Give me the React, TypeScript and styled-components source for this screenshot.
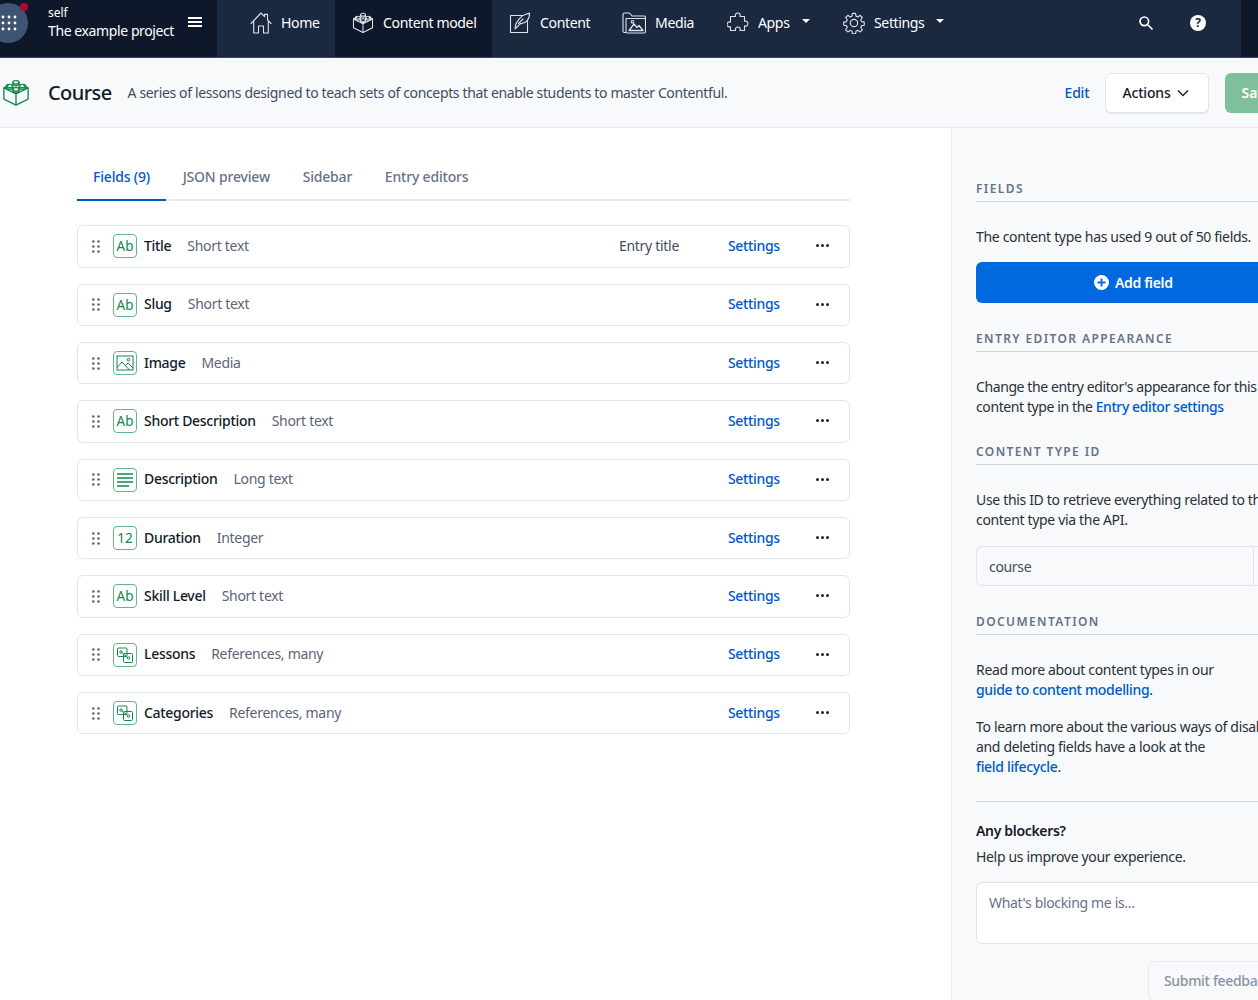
import React from "react";
import styled, { createGlobalStyle } from "styled-components";

const Global = createGlobalStyle`
  html, body { margin: 0; padding: 0; background: #fff; overflow: hidden; }
  body { font-family: "Noto Sans", "Open Sans", sans-serif; color: #2a3039; }
  * { box-sizing: border-box; }
`;

const Page = styled.div`
  width: 1258px;
  height: 1000px;
  overflow: hidden;
  display: flex;
  flex-direction: column;
`;

const TopBar = styled.nav`
  height: 58px;
  flex: none;
  display: flex;
  background: #1a2840;
  color: #fff;
  border-bottom: 1px solid #3d4757;
`;

const Brand = styled.div`
  width: 217px;
  flex: none;
  background: #0f182b;
  display: flex;
  align-items: center;
  position: relative;
`;

const Launcher = styled.div`
  position: relative;
  width: 40px;
  height: 40px;
  margin: -11px 0 0 -12px;
  border-radius: 50%;
  background: #3f5470;
  flex: none;
  display: flex;
  align-items: center;
  justify-content: center;
  padding-left: 2px;
`;

const Dot = styled.span`
  position: absolute;
  top: 0;
  right: 0;
  width: 8px;
  height: 8px;
  border-radius: 50%;
  background: #b3052f;
`;

const Project = styled.div`
  margin: -11px 0 0 20px;
  width: 140px;
  flex: none;
`;

const Org = styled.div`
  font-size: 12px;
  line-height: 16px;
`;

const ProjectName = styled.div`
  font-size: 14px;
  line-height: 20px;
  letter-spacing: -0.4px;
  white-space: nowrap;
`;

const Burger = styled.div`
  width: 14px;
  margin-top: -13px;
  display: flex;
  flex-direction: column;
  gap: 2px;
  span { display: block; height: 2px; background: #fff; }
`;

const NavItem = styled.div<{ $w: number; $bg?: string; $lift?: number }>`
  width: ${(p) => p.$w}px;
  flex: none;
  display: flex;
  align-items: center;
  padding-left: ${(p) => p.$lift ?? 33}px;
  gap: 9px;
  background: ${(p) => p.$bg ?? "transparent"};
  font-size: 14.1px;
  letter-spacing: -0.4px;
  white-space: nowrap;
  padding-bottom: 12px;
  svg { flex: none; }
`;

const Caret = styled.span`
  width: 0;
  height: 0;
  margin: -4px 0 0 3px;
  border-left: 4.5px solid transparent;
  border-right: 4.5px solid transparent;
  border-top: 4.5px solid #fff;
`;

const Tools = styled.div`
  flex: 1;
  display: flex;
  align-items: center;
  padding-bottom: 12px;
  justify-content: flex-end;
  gap: 36px;
`;

const EdgeBlock = styled.div`
  width: 17px;
  flex: none;
  background: #0f182b;
  margin-left: -1px;
  align-self: stretch;
  margin-bottom: -12px;
`;

const Help = styled.span`
  width: 16px;
  height: 16px;
  border-radius: 50%;
  background: #fff;
  color: #1a2840;
  font-size: 12px;
  font-weight: 700;
  line-height: 16px;
  text-align: center;
`;

const Header = styled.header`
  height: 70px;
  flex: none;
  display: flex;
  align-items: center;
  background: #f7f9fa;
  border-bottom: 1px solid #e5e8ec;
  padding-left: 2px;
  white-space: nowrap;
  svg { flex: none; }
`;

const Title = styled.h1`
  margin: 0 0 0 18px;
  font-size: 20px;
  font-weight: 500;
  color: #111b2b;
  letter-spacing: -0.6px;
`;

const Description = styled.p`
  margin: 0 0 0 16px;
  font-size: 14px;
  letter-spacing: -0.36px;
  color: #414d63;
  width: 937px;
  flex: none;
`;

const EditLink = styled.a`
  color: #0059c8;
  font-size: 14px;
  font-weight: 500;
  letter-spacing: -0.2px;
  width: 40px;
  flex: none;
`;

const ActionsButton = styled.div`
  width: 104px;
  height: 40px;
  flex: none;
  border: 1px solid #e0e5ea;
  border-radius: 6px;
  background: #fff;
  display: flex;
  align-items: center;
  justify-content: center;
  gap: 6px;
  font-size: 14px;
  font-weight: 500;
  letter-spacing: -0.2px;
  color: #111b2b;
  box-shadow: 0 1px 0 rgba(25, 37, 50, 0.08);
`;

const SaveButton = styled.div`
  width: 80px;
  height: 40px;
  flex: none;
  margin-left: 16px;
  border-radius: 6px;
  background: #7fbf9b;
  color: #fff;
  font-size: 14px;
  font-weight: 600;
  line-height: 40px;
  padding-left: 17px;
`;

const Body = styled.div`
  flex: 1;
  display: flex;
  min-height: 0;
`;

const Main = styled.main`
  width: 951px;
  flex: none;
  background: #fff;
  padding: 32px 0 0 77px;
`;

const Tabs = styled.div`
  width: 773px;
  height: 41px;
  display: flex;
  gap: 0.6px;
  border-bottom: 2px solid #e7ebee;
`;

const Tab = styled.div<{ $active?: boolean }>`
  height: 41px;
  padding: 7px 16px 0;
  font-size: 14px;
  font-weight: 500;
  letter-spacing: -0.18px;
  line-height: 20px;
  color: ${(p) => (p.$active ? "#0059c8" : "#67728a")};
  border-bottom: 2px solid ${(p) => (p.$active ? "#0059c8" : "transparent")};
`;

const Rows = styled.div`
  margin-top: 24.34px;
  width: 773px;
  display: flex;
  flex-direction: column;
  gap: 16px;
`;

const Row = styled.div`
  height: 42.33px;
  border: 1px solid #e0e5ea;
  border-radius: 6px;
  display: flex;
  align-items: center;
  padding-left: 14px;
  font-size: 14px;
`;

const Handle = styled.svg`
  flex: none;
`;

const FieldBadge = styled.span`
  width: 24px;
  height: 24px;
  flex: none;
  margin-left: 13px;
  border: 1px solid #64b58a;
  border-radius: 4px;
  color: #14884a;
  font-size: 13.5px;
  line-height: 22px;
  text-align: center;
  display: flex;
  align-items: center;
  justify-content: center;
`;

const FieldName = styled.span`
  margin: -2px 0 0 7px;
  font-weight: 500;
  letter-spacing: -0.3px;
  color: #111b2b;
`;

const FieldType = styled.span`
  margin: -2px 0 0 16px;
  color: #5a6479;
  letter-spacing: -0.3px;
  flex: 1;
`;

const EntryTitle = styled.span`
  width: 109px;
  flex: none;
  margin-top: -2px;
  color: #414d63;
  letter-spacing: -0.3px;
`;

const SettingsLink = styled.a`
  width: 88px;
  flex: none;
  margin-top: -2px;
  color: #0059c8;
  font-weight: 500;
  letter-spacing: -0.35px;
`;

const More = styled.span`
  width: 13px;
  flex: none;
  margin-right: 20px;
  display: flex;
  gap: 2px;
  margin-top: -1px;
  i { width: 3px; height: 3px; border-radius: 50%; background: #192532; }
`;

const Aside = styled.aside`
  flex: 1;
  background: #f7f9fa;
  border-left: 1px solid #eceff1;
  padding: 54px 0 0 24px;
  font-size: 14px;
  line-height: 20px;
  letter-spacing: -0.33px;
  color: #2a3039;
  white-space: nowrap;
  overflow: hidden;
`;

const SectionHead = styled.h2<{ $top?: number }>`
  margin: ${(p) => p.$top ?? 0}px 0 0;
  width: 320px;
  height: 14px;
  padding-bottom: 5px;
  border-bottom: 1px solid #cfd9e0;
  box-sizing: content-box;
  font-size: 12px;
  line-height: 14px;
  font-weight: 600;
  letter-spacing: 1.39px;
  color: #67728a;
`;

const Para = styled.p<{ $top?: number; $tight?: boolean }>`
  margin: ${(p) => p.$top ?? 25}px 0 0;
  letter-spacing: ${(p) => (p.$tight ? "-0.4px" : "inherit")};
`;

const Link = styled.a`
  color: #0059c8;
  font-weight: 500;
`;

const PrimaryButton = styled.div`
  margin-top: 15px;
  width: 312px;
  height: 41px;
  border-radius: 6px;
  background: #0069e0;
  color: #fff;
  display: flex;
  align-items: center;
  gap: 6px;
  padding-left: 118px;
  font-weight: 600;
  font-size: 14px;
`;

const IdInput = styled.div`
  margin-top: 16px;
  width: 320px;
  height: 40px;
  border: 1px solid #e0e5ea;
  border-radius: 6px 0 0 6px;
  display: flex;
  align-items: center;
  padding: 1px 0 0 12px;
  color: #414d63;
  position: relative;
  &::after {
    content: "";
    position: absolute;
    left: 276px;
    top: 0;
    bottom: 0;
    width: 1px;
    background: #e0e5ea;
  }
`;

const Rule = styled.hr`
  margin: 24px 0 0;
  width: 320px;
  border: 0;
  border-top: 1px solid #cfd9e0;
`;

const Strong = styled.div`
  margin-top: 19px;
  font-weight: 600;
  color: #111b2b;
`;

const Note = styled.p`
  margin: 6px 0 0;
`;

const FeedbackBox = styled.div`
  margin-top: 15px;
  width: 320px;
  height: 62px;
  border: 1px solid #e0e5ea;
  border-radius: 6px;
  background: #fff;
  padding: 10px 12px;
  color: #67728a;
`;

const SubmitButton = styled.div`
  margin: 17px 0 0 172px;
  width: 150px;
  height: 40px;
  border: 1px solid #e7ebee;
  border-radius: 6px;
  padding: 9px 15px;
  color: #8a93a5;
  font-weight: 500;
`;

const Stroke = { fill: "none", stroke: "#dfe4ea", strokeWidth: 1.1, strokeLinejoin: "round" as const, strokeLinecap: "round" as const };

const Stud = ({ x, y }: { x: number; y: number }) => (
  <>
    <ellipse cx={x} cy={y} rx="3.4" ry="1.9" />
    <path d={`M${x - 3.4} ${y}v1.6a3.4 1.9 0 0 0 6.8 0V${y}`} />
  </>
);

const LegoPaths = () => (
  <>
    <path d="M7 6.800 2 9.500v12L15 28l13-6.500v-12L23 6.800" />
    <path d="M2 9.500 15 16l13-6.500M15 16v12" />
    <Stud x={15} y={3.600} />
    <Stud x={8} y={7.600} />
    <Stud x={22} y={7.600} />
    <Stud x={15} y={11} />
  </>
);

const HomeIcon = () => (
  <svg width="22" height="22" viewBox="0 0 22 22" {...Stroke}>
    <path d="M1 11.500 11 1l3.500 3.600V2.400h3v5.400l3.500 3.700" />
    <path d="M3.700 9.500V21h4.800v-7h5v7h4.800V9.500" />
  </svg>
);

const ModelIcon = () => (
  <svg width="22" height="22" viewBox="0 0 30 30" {...Stroke} strokeWidth={1.4}>
    <LegoPaths />
  </svg>
);

const ContentIcon = () => (
  <svg width="22" height="22" viewBox="0 0 22 22" {...Stroke}>
    <path d="M14 3.500H1.500v17h17V9" />
    <path d="M6 15.500C7 9 12 3 20.500 1c.4 6-3.800 11-9 10.600L6 17" />
    <path d="M9.500 11.500 14 7" />
  </svg>
);

const MediaIcon = () => (
  <svg width="24" height="22" viewBox="0 0 24 22" {...Stroke}>
    <path d="M4 20.500H2.500A1.500 1.500 0 0 1 1 19V2.500A1.500 1.500 0 0 1 2.500 1h5l2.500 3h12A1.500 1.500 0 0 1 23.500 5.500v14a1.500 1.500 0 0 1-1.500 1.500H5.500A1.500 1.500 0 0 1 4 19.500V6.500h19.500" />
    <path d="M7 18.500 12 12l3 3.500 2-2 4 5z" strokeWidth="1.300" />
    <circle cx="10.500" cy="9.800" r="1.300" />
  </svg>
);

const AppsIcon = () => (
  <svg width="22" height="22" viewBox="0 0 22 22" {...Stroke}>
    <path d="M8.500 4.500a2.500 2.500 0 1 1 4.600 0h4.400v4.800a2.500 2.500 0 1 1 0 4.600v4.600h-4.400a2.500 2.500 0 1 0-4.600 0H3.500v-3.800a2.500 2.500 0 1 1 0-4.600V4.500z" />
  </svg>
);

const GearIcon = () => (
  <svg width="22" height="22" viewBox="0 0 24 24" {...Stroke} strokeWidth={1.2}>
    <circle cx="12" cy="12" r="4" />
    <path d="M10.300 1.500h3.400l.5 3 2 .9 2.500-1.800 2.400 2.400-1.800 2.500.9 2 3 .5v3.400l-3 .5-.9 2 1.800 2.500-2.400 2.400-2.500-1.800-2 .9-.5 3h-3.400l-.5-3-2-.9-2.500 1.800-2.400-2.400 1.800-2.500-.9-2-3-.5v-3.400l3-.5.9-2-1.800-2.500 2.400-2.400 2.500 1.800 2-.9z" />
  </svg>
);

const Search = () => (
  <svg width="16" height="16" viewBox="0 0 16 16" fill="none" stroke="#fff" strokeWidth="1.700">
    <circle cx="6.300" cy="6.300" r="4.300" />
    <path d="m9.500 9.500 5 5" />
  </svg>
);

const GridDots = () => (
  <svg width="16" height="16" viewBox="0 0 16 16" fill="#fff">
    {[2, 8, 14].flatMap((y) => [2, 8, 14].map((x) => <circle key={`${x}-${y}`} cx={x} cy={y} r="1.400" />))}
  </svg>
);

const HandleIcon = () => (
  <Handle width="8" height="13" viewBox="0 0 8 13" fill="#5a6479">
    {[1.500, 6.500, 11.500].flatMap((y) => [1.300, 6.500].map((x) => <circle key={`${x}-${y}`} cx={x} cy={y} r="1.300" />))}
  </Handle>
);

const Green = { fill: "none", stroke: "#14884a", strokeWidth: 1 };

const ImageGlyph = () => (
  <svg width="18" height="18" viewBox="0 0 18 18" {...Green}>
    <rect x="1" y="2" width="16" height="14" />
    <path d="m1 13.500 5-5.500 7.500 8M9.500 11.500l2.500-2.500 5 5" />
    <circle cx="12.500" cy="5.800" r="1.300" />
  </svg>
);

const LinesGlyph = () => (
  <svg width="18" height="16" viewBox="0 0 18 16" stroke="#14884a" strokeWidth="1.500">
    <path d="M1 2h16M1 6h16M1 10h16M1 14h12" />
  </svg>
);

const RefGlyph = () => (
  <svg width="18" height="18" viewBox="0 0 18 18" {...Green}>
    <rect x="1.500" y="2" width="9.500" height="8.500" rx="1" />
    <rect x="7.500" y="7.500" width="9" height="9" rx="1" />
    <circle cx="5" cy="6" r="1.200" />
    <circle cx="12.500" cy="12" r="1.200" />
    <path d="m6 6.800 5.500 4.400" />
  </svg>
);

const Chevron = () => (
  <svg width="14" height="14" viewBox="0 0 14 14" fill="none" stroke="#192532" strokeWidth="1.500">
    <path d="m2 4.500 5 5 5-5" />
  </svg>
);

const PlusCircle = () => (
  <svg width="15" height="15" viewBox="0 0 15 15">
    <circle cx="7.500" cy="7.500" r="7.500" fill="#fff" />
    <path d="M7.500 3.500v8M3.500 7.500h8" stroke="#0069e0" strokeWidth="1.800" />
  </svg>
);

type Kind = "text" | "image" | "lines" | "number" | "ref";

const fields: { name: string; type: string; kind: Kind; title?: boolean }[] = [
  { name: "Title", type: "Short text", kind: "text", title: true },
  { name: "Slug", type: "Short text", kind: "text" },
  { name: "Image", type: "Media", kind: "image" },
  { name: "Short Description", type: "Short text", kind: "text" },
  { name: "Description", type: "Long text", kind: "lines" },
  { name: "Duration", type: "Integer", kind: "number" },
  { name: "Skill Level", type: "Short text", kind: "text" },
  { name: "Lessons", type: "References, many", kind: "ref" },
  { name: "Categories", type: "References, many", kind: "ref" },
];

const glyph = (k: Kind) => {
  if (k === "text") return "Ab";
  if (k === "number") return "12";
  if (k === "image") return <ImageGlyph />;
  if (k === "lines") return <LinesGlyph />;
  return <RefGlyph />;
};

export default function App() {
  return (
    <Page>
      <Global />
      <TopBar>
        <Brand>
          <Launcher>
            <GridDots />
            <Dot />
          </Launcher>
          <Project>
            <Org>self</Org>
            <ProjectName>The example project</ProjectName>
          </Project>
          <Burger>
            <span />
            <span />
            <span />
          </Burger>
        </Brand>
        <NavItem $w={118} $bg="#1a2840"><HomeIcon />Home</NavItem>
        <NavItem $w={157} $bg="#0f182b" $lift={17}><ModelIcon />Content model</NavItem>
        <NavItem $w={130} $lift={17}><ContentIcon />Content</NavItem>
        <NavItem $w={105} $lift={0}><MediaIcon />Media</NavItem>
        <NavItem $w={116} $lift={0}><AppsIcon />Apps<Caret /></NavItem>
        <NavItem $w={130} $lift={0}><GearIcon />Settings<Caret /></NavItem>
        <Tools>
          <Search />
          <Help>?</Help>
          <EdgeBlock />
        </Tools>
      </TopBar>
      <Header>
        <svg width="28" height="28" viewBox="0 0 30 30" fill="none" stroke="#14884a" strokeWidth="1.400" strokeLinejoin="round">
          <LegoPaths />
        </svg>
        <Title>Course</Title>
        <Description>A series of lessons designed to teach sets of concepts that enable students to master Contentful.</Description>
        <EditLink>Edit</EditLink>
        <ActionsButton>Actions <Chevron /></ActionsButton>
        <SaveButton>Save</SaveButton>
      </Header>
      <Body>
        <Main>
          <Tabs>
            <Tab $active>Fields (9)</Tab>
            <Tab>JSON preview</Tab>
            <Tab>Sidebar</Tab>
            <Tab>Entry editors</Tab>
          </Tabs>
          <Rows>
            {fields.map((f) => (
              <Row key={f.name}>
                <HandleIcon />
                <FieldBadge>{glyph(f.kind)}</FieldBadge>
                <FieldName>{f.name}</FieldName>
                <FieldType>{f.type}</FieldType>
                {f.title && <EntryTitle>Entry title</EntryTitle>}
                <SettingsLink>Settings</SettingsLink>
                <More><i /><i /><i /></More>
              </Row>
            ))}
          </Rows>
        </Main>
        <Aside>
          <SectionHead>FIELDS</SectionHead>
          <Para>The content type has used 9 out of 50 fields.</Para>
          <PrimaryButton><PlusCircle />Add field</PrimaryButton>
          <SectionHead $top={29}>ENTRY EDITOR APPEARANCE</SectionHead>
          <Para $tight>Change the entry editor's appearance for this<br />content type in the <Link>Entry editor settings</Link></Para>
          <SectionHead $top={28}>CONTENT TYPE ID</SectionHead>
          <Para>Use this ID to retrieve everything related to this<br />content type via the API.</Para>
          <IdInput>course</IdInput>
          <SectionHead $top={29}>DOCUMENTATION</SectionHead>
          <Para>Read more about content types in our<br /><Link>guide to content modelling</Link>.</Para>
          <Para $top={17}>To learn more about the various ways of disabling<br />and deleting fields have a look at the<br /><Link>field lifecycle</Link>.</Para>
          <Rule />
          <Strong>Any blockers?</Strong>
          <Note>Help us improve your experience.</Note>
          <FeedbackBox>What's blocking me is...</FeedbackBox>
          <SubmitButton>Submit feedback</SubmitButton>
        </Aside>
      </Body>
    </Page>
  );
}
